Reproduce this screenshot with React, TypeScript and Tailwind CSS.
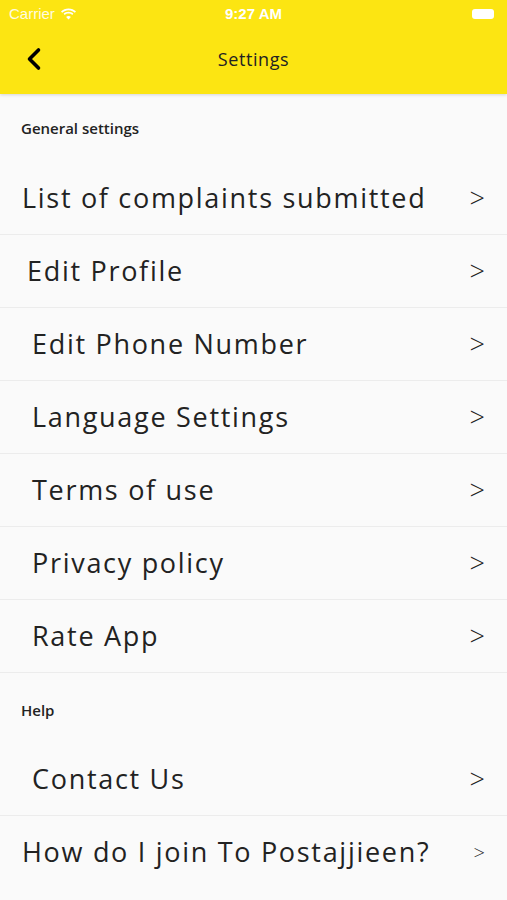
import { ChevronLeft } from 'lucide-react';

interface Row {
  label: string;
  indent: string;
  small?: boolean;
}

const general: Row[] = [
  { label: 'List of complaints submitted', indent: 'pl-[22px]' },
  { label: 'Edit Profile', indent: 'pl-[27px]' },
  { label: 'Edit Phone Number', indent: 'pl-[32px]' },
  { label: 'Language Settings', indent: 'pl-[32px]' },
  { label: 'Terms of use', indent: 'pl-[32px]' },
  { label: 'Privacy policy', indent: 'pl-[32px]' },
  { label: 'Rate App', indent: 'pl-[32px]' },
];

const help: Row[] = [
  { label: 'Contact Us', indent: 'pl-[32px]' },
  { label: 'How do I join To Postajjieen?', indent: 'pl-[22px]', small: true },
];

function SettingsRow({ row, last }: { row: Row; last?: boolean }) {
  return (
    <div
      className={`flex items-center justify-between h-[73px] pr-[22px] ${row.indent} ${
        last ? '' : 'border-b border-[#ececec]'
      }`}
    >
      <span className="text-[27px] text-[#222] tracking-[1.7px]">{row.label}</span>
      <span className={row.small ? 'text-[20px] text-[#222] font-light' : 'text-[27px] text-[#222] font-light'}>&gt;</span>
    </div>
  );
}

function WifiIcon() {
  return (
    <svg width="17" height="12" viewBox="0 0 17 12" fill="white">
      <path d="M8.5 2.2c2.4 0 4.6.9 6.3 2.5l1.2-1.3C14 1.5 11.4.4 8.5.4S3 1.5 1 3.4l1.2 1.3C3.9 3.1 6.1 2.2 8.5 2.2z" />
      <path d="M8.5 5.6c1.4 0 2.7.5 3.7 1.4l1.2-1.3C12.1 4.5 10.4 3.8 8.5 3.8S4.9 4.5 3.6 5.7l1.2 1.3c1-.9 2.3-1.4 3.7-1.4z" />
      <path d="M8.5 11.6l2.4-2.6c-.6-.6-1.5-.9-2.4-.9s-1.8.3-2.4.9z" />
    </svg>
  );
}

export default function App() {
  return (
    <div className="w-[507px] h-[900px] bg-[#fafafa] overflow-hidden" style={{ fontFamily: '"Open Sans", Lato, sans-serif' }}>
      {/* Header */}
      <div className="bg-[#fce512] h-[94px] shadow-[0_1px_3px_rgba(0,0,0,0.15)] relative">
        <div className="flex items-center justify-between h-[28px] px-[9px] text-white text-[15px]" style={{ fontFamily: '"Liberation Sans", sans-serif' }}>
          <div className="flex items-center gap-[5px] text-[#fffbe0]">
            <span>Carrier</span>
            <WifiIcon />
          </div>
          <span className="font-bold absolute left-1/2 -translate-x-1/2">9:27 AM</span>
          <div className="w-[22px] h-[10px] bg-white rounded-[3px] mr-[4px]" />
        </div>
        <div className="flex items-center h-[62px] px-[22px] relative">
          <ChevronLeft className="w-[36px] h-[36px] text-black -ml-[6px]" strokeWidth={2.4} />
          <span className="absolute left-1/2 -translate-x-1/2 text-[18px] text-[#222] tracking-[0.6px]">Settings</span>
        </div>
      </div>

      {/* General settings */}
      <div className="pl-[21px] pt-[22px] pb-[22px] text-[15px] leading-[24px] font-semibold text-[#222]">General settings</div>
      {general.map((row) => (
        <SettingsRow key={row.label} row={row} />
      ))}

      {/* Help */}
      <div className="pl-[21px] pt-[25px] pb-[21px] text-[15px] leading-[24px] font-semibold text-[#222]">Help</div>
      {help.map((row, i) => (
        <SettingsRow key={row.label} row={row} last={i === help.length - 1} />
      ))}
    </div>
  );
}
